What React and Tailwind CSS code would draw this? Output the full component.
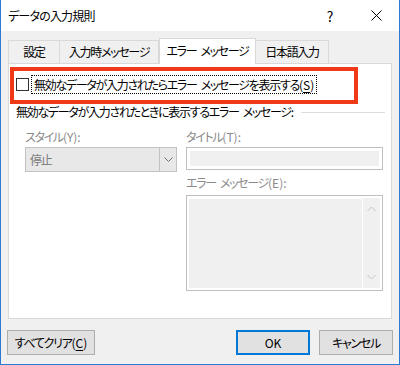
import React from "react";

const F = "font-['Noto_Sans_CJK_JP','Noto_Sans',sans-serif] [font-feature-settings:'palt'] tracking-[-1.3px]";

function L({ children }) {
  return <span className="tracking-normal">{children}</span>;
}

function Sp() {
  return <span className="inline-block w-[4px]" />;
}

export default function App() {
  return (
    <div className={`${F} flex h-[365px] w-[400px] flex-col border-x border-b border-[#2b7bd0] bg-[#f0f0f0] leading-none`}>
      {/* title bar */}
      <div className="flex h-[31px] shrink-0 items-center bg-white">
        <div className="flex-1 pl-[7px] text-[12px] tracking-[-0.8px] text-black">データの入力規則</div>
        <div className="flex h-full w-[46px] items-center justify-center text-[14px] tracking-normal text-black">?</div>
        <div className="flex h-full w-[46px] items-center justify-center">
          <svg width="11" height="11" viewBox="0 0 11 11">
            <path d="M0.5 0.5 L10.5 10.5 M10.5 0.5 L0.5 10.5" stroke="#000" strokeWidth="1" />
          </svg>
        </div>
      </div>

      {/* tabs */}
      <div className="flex h-[32px] shrink-0 items-end pl-[7px]">
        <div className="flex w-[52px]">
          <div className="flex h-[23px] w-full items-center justify-center border border-b-0 border-[#d9d9d9] bg-[#f0f0f0] text-[12px]">設定</div>
        </div>
        <div className="flex w-[99px]">
          <div className="flex h-[23px] w-full items-center justify-center border border-b-0 border-l-0 border-[#d9d9d9] bg-[#f0f0f0] text-[12px]">入力時メッセージ</div>
        </div>
        <div className="relative z-10 -mb-px flex h-[26px] w-[97px] items-center justify-center border border-b-0 border-[#d9d9d9] bg-white pb-[1px] text-[12px]">
          エラー<Sp />メッセージ
        </div>
        <div className="flex w-[73px]">
          <div className="flex h-[23px] w-full items-center justify-center border border-b-0 border-l-0 border-[#d9d9d9] bg-[#f0f0f0] text-[12px]">日本語入力</div>
        </div>
      </div>

      {/* panel */}
      <div className="relative mx-[7px] h-[256px] shrink-0 border border-[#d9d9d9] bg-white">
        <div className="flex flex-col pl-[7px] pr-[6px] pt-[11px]">
          {/* checkbox row */}
          <div className="flex h-[19px] items-center">
            <div className="h-[13px] w-[13px] border border-[#333333] bg-white" />
            <div className="ml-[2px] flex h-[19px] items-center border border-dotted border-black pl-[2px] pr-[2px] text-[12px] text-black">
              無効なデータが入力されたらエラー<Sp />メッセージを表示する<L>(<span className="underline underline-offset-2">S</span>)</L>
            </div>
          </div>

          {/* group heading */}
          <div className="mt-[10px] flex h-[16px] items-center">
            <span className="text-[12px] text-black">無効なデータが入力されたときに表示するエラー<Sp />メッセージ<L>:</L></span>
            <div className="ml-[7px] h-px flex-1 bg-[#dcdcdc]" />
          </div>

          {/* group contents */}
          <div className="ml-[9px] mt-[9px] flex gap-[9px]">
            <div className="flex w-[152px] flex-col">
              <div className="flex h-[16px] items-center text-[12px] text-[#8a8a8a]">スタイル<L>(Y):</L></div>
              <div className="mt-[2px] flex h-[25px] border border-[#c2c2c2] bg-[#e8e8e8]">
                <div className="flex flex-1 items-center pl-[4px] text-[12px] text-[#7a7a7a]">停止</div>
                <div className="flex w-[17px] items-center justify-center border-l border-[#c2c2c2]">
                  <svg width="9" height="6" viewBox="0 0 9 6">
                    <path d="M0.5 0.5 L4.5 4.5 L8.5 0.5" stroke="#707070" strokeWidth="1" fill="none" />
                  </svg>
                </div>
              </div>
            </div>
            <div className="flex w-[197px] flex-col">
              <div className="flex h-[16px] items-center text-[12px] text-[#8a8a8a]">タイトル<L>(T):</L></div>
              <div className="mt-[2px] h-[23px] border border-[#bfbfbf] bg-white p-[3px]">
                <div className="h-full w-full bg-[#f0f0f0]" />
              </div>
              <div className="mt-[5px] flex h-[16px] items-center text-[12px] text-[#8a8a8a]">エラー<Sp />メッセージ<L>(E):</L></div>
              <div className="mt-[4px] flex h-[96px] border border-[#bfbfbf] bg-white p-[2px]">
                <div className="mr-[1px] mt-px flex-1 bg-[#f0f0f0]" />
                <div className="flex w-[17px] flex-col items-center justify-between bg-[#f0f0f0] py-[8px]">
                  <svg width="9" height="6" viewBox="0 0 9 6">
                    <path d="M0.5 5 L4.5 1 L8.5 5" stroke="#c4c4c4" strokeWidth="1" fill="none" />
                  </svg>
                  <svg width="9" height="6" viewBox="0 0 9 6">
                    <path d="M0.5 1 L4.5 5 L8.5 1" stroke="#c4c4c4" strokeWidth="1" fill="none" />
                  </svg>
                </div>
              </div>
            </div>
          </div>
        </div>

        {/* red annotation box */}
        <div className="pointer-events-none absolute left-[1px] top-[3px] h-[37px] w-[348px] border-[4px] border-[#f03a17]" />
      </div>

      {/* buttons */}
      <div className="mt-[11px] flex items-start pl-[6px] pr-[6px]">
        <div className="flex h-[25px] w-[88px] items-center justify-center border border-[#adadad] bg-[#e1e1e1] text-[12px] text-black">
          すべてクリア<L>(<span className="underline underline-offset-2">C</span>)</L>
        </div>
        <div className="flex-1" />
        <div className="flex h-[25px] w-[74px] items-center justify-center border-2 border-[#0078d7] bg-[#e1e1e1] text-[12px] tracking-normal text-black">
          OK
        </div>
        <div className="ml-[9px] flex h-[25px] w-[74px] items-center justify-center border border-[#adadad] bg-[#e1e1e1] text-[12px] text-black">
          キャンセル
        </div>
      </div>
    </div>
  );
}
